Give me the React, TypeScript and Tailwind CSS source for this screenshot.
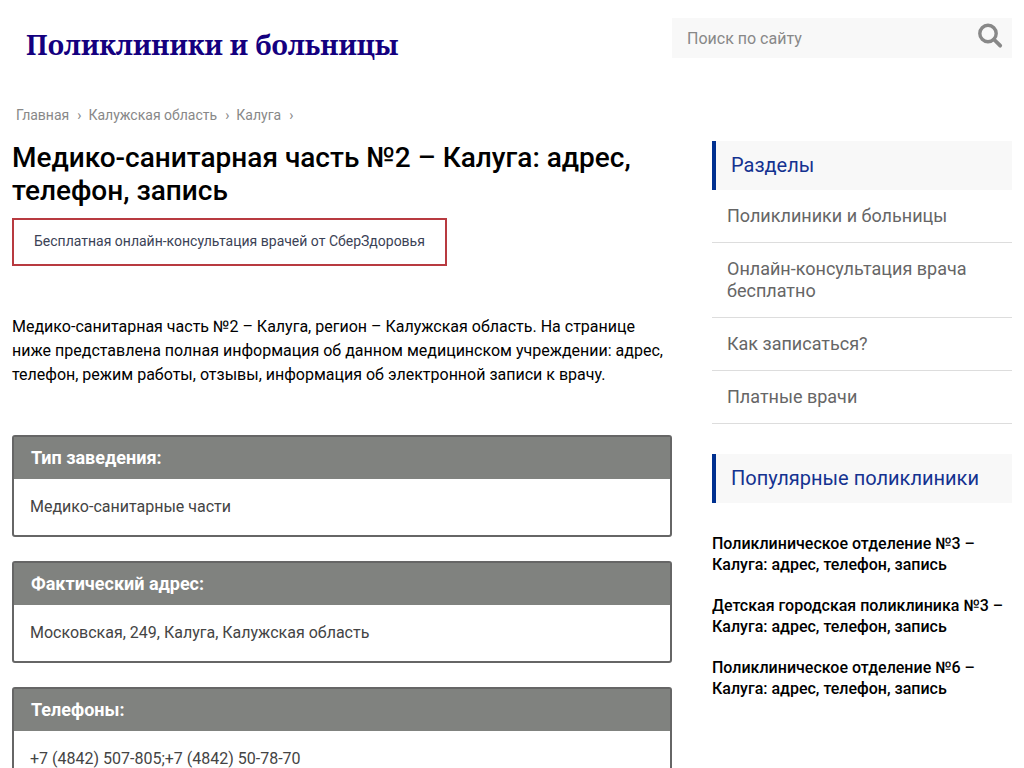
import { useState } from "react";

interface InfoBlock {
  title: string;
  text: string;
}

const BREADCRUMBS = ["Главная", "Калужская область", "Калуга"];

const INFO: InfoBlock[] = [
  { title: "Тип заведения:", text: "Медико-санитарные части" },
  { title: "Фактический адрес:", text: "Московская, 249, Калуга, Калужская область" },
  { title: "Телефоны:", text: "+7 (4842) 507-805;+7 (4842) 50-78-70" },
];

const SECTIONS = [
  "Поликлиники и больницы",
  "Онлайн-консультация врача бесплатно",
  "Как записаться?",
  "Платные врачи",
];

const POPULAR = [
  "Поликлиническое отделение №3 – Калуга: адрес, телефон, запись",
  "Детская городская поликлиника №3 – Калуга: адрес, телефон, запись",
  "Поликлиническое отделение №6 – Калуга: адрес, телефон, запись",
];

function WidgetTitle({ children }: { children: string }) {
  return (
    <h2 className="border-l-4 border-[#003090] bg-[#f8f8f8] py-3 pl-[15px] text-xl leading-[25px] text-[#143290]">
      {children}
    </h2>
  );
}

export default function App() {
  const [query, setQuery] = useState("");

  return (
    <div className="min-h-screen bg-white font-['Roboto',sans-serif] text-black">
      <div className="mx-auto max-w-[1200px] px-3">
        {/* Header */}
        <header className="flex items-start justify-between pt-[18px]">
          <a
            href="#"
            className="pt-[7px] pl-[14px] font-['Noto_Serif','PT_Serif','Droid_Serif',serif] text-[27px] leading-10 font-bold text-[#14007f]"
          >
            Поликлиники и больницы
          </a>
          <form className="flex h-10 w-[340px] items-center bg-[#f8f8f8]" onSubmit={(e) => e.preventDefault()}>
            <input
              type="text"
              aria-label="Поиск по сайту"
              placeholder="Поиск по сайту"
              value={query}
              onChange={(e) => setQuery(e.target.value)}
              className="h-10 min-w-0 flex-1 pl-[15px] text-base outline-none placeholder:text-[#888888]"
            />
            <button type="submit" aria-label="Найти" className="flex h-10 w-11 items-center justify-center pb-1">
              <svg viewBox="0 0 26 26" className="h-[26px] w-[26px]" fill="none" stroke="#888888">
                <circle cx="11" cy="10.5" r="8.2" strokeWidth="3.4" />
                <path d="M17 16.5L23.2 22.7" strokeWidth="3.8" strokeLinecap="round" />
              </svg>
            </button>
          </form>
        </header>

        {/* Breadcrumbs */}
        <nav className="mt-10 flex pl-1 text-sm leading-5 text-[#888888]">
          {BREADCRUMBS.map((item) => (
            <span key={item} className="flex">
              <a href="#">{item}</a>
              <span className="pr-[7px] pl-2">›</span>
            </span>
          ))}
        </nav>

        <div className="mt-4 flex items-start gap-10">
          <main className="min-w-0 flex-1">
            <h1 className="text-[28px] leading-[33px] font-medium">
              Медико-санитарная часть №2 – Калуга: адрес, телефон, запись
            </h1>
            <a
              href="#"
              className="mt-[11px] inline-block border-2 border-[#b83a40] px-5 pt-[11px] pb-[13px] text-sm leading-5 text-[#3b4256]"
            >
              Бесплатная онлайн-консультация врачей от СберЗдоровья
            </a>
            <p className="mt-[49px] text-base leading-6">
              Медико-санитарная часть №2 – Калуга, регион – Калужская область. На странице ниже представлена полная
              информация об данном медицинском учреждении: адрес, телефон, режим работы, отзывы, информация об
              электронной записи к врачу.
            </p>

            <div className="mt-12 flex flex-col gap-6">
              {INFO.map((block) => (
                <section key={block.title} className="rounded-[3px] border-2 border-[#666666] bg-white">
                  <h3 className="bg-[#80827f] px-[17px] py-2 text-lg leading-[26px] font-bold text-white">
                    {block.title}
                  </h3>
                  <p className="px-4 py-4 text-base leading-6 text-[#444444]">{block.text}</p>
                </section>
              ))}
            </div>
          </main>

          {/* Sidebar */}
          <aside className="w-[300px] shrink-0">
            <WidgetTitle>Разделы</WidgetTitle>
            <ul className="mb-[30px] text-lg leading-[22px] text-[#666666]">
              {SECTIONS.map((item) => (
                <li key={item} className="border-b border-[#dddddd]">
                  <a href="#" className="block px-[15px] py-[15px]">
                    {item}
                  </a>
                </li>
              ))}
            </ul>

            <WidgetTitle>Популярные поликлиники</WidgetTitle>
            <div className="mt-[30px] flex flex-col gap-5 text-base leading-[21px] font-medium">
              {POPULAR.map((item) => (
                <a key={item} href="#">
                  {item}
                </a>
              ))}
            </div>
          </aside>
        </div>
      </div>
    </div>
  );
}
